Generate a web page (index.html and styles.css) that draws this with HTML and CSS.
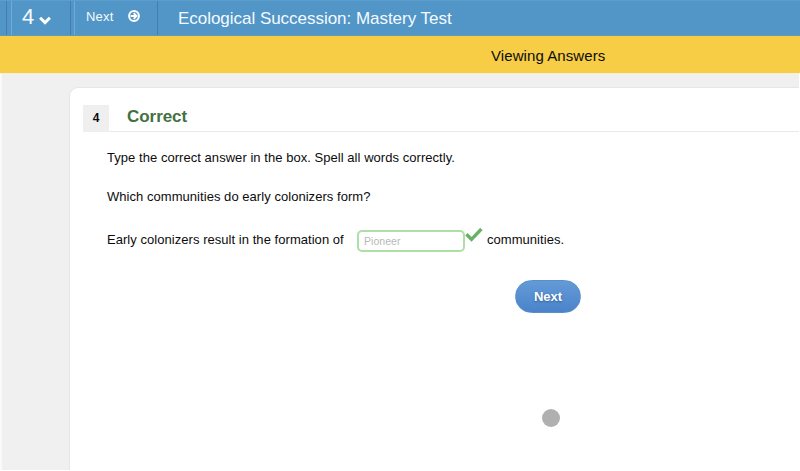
FILE: index.html
```html
<!DOCTYPE html>
<html lang="en">
<head>
<meta charset="utf-8">
<title>Ecological Succession: Mastery Test</title>
<link rel="stylesheet" href="styles.css">
</head>
<body>
<header class="topbar">
  <div class="edge"></div>
  <div class="number"><span>4</span><svg class="chevron" width="12" height="9" viewBox="0 0 12 9"><path d="M1.1 1.8 6 6.6 10.9 1.8" fill="none" stroke="#fff" stroke-width="3"/></svg></div>
  <div class="next"><span>Next</span><svg class="arrow" width="12" height="12" viewBox="0 0 12 12"><circle cx="6" cy="6" r="4.9" fill="none" stroke="#fff" stroke-width="2"/><path d="M2.6 6H8M5.7 3.1 8.6 6 5.7 8.9" fill="none" stroke="#fff" stroke-width="1.8"/></svg></div>
  <h1 class="title"><span>Ecological Succession: Mastery Test</span></h1>
</header>
<div class="notice"><span>Viewing Answers</span></div>
<main class="page">
  <section class="card">
    <div class="heading"><div class="badge">4</div><h2><span>Correct</span></h2></div>
    <div class="question">
      <p><span>Type the correct answer in the box. Spell all words correctly.</span></p>
      <p><span>Which communities do early colonizers form?</span></p>
      <div class="answer"><span class="lead">Early colonizers result in the formation of</span><div class="field">Pioneer</div><svg class="check" width="18" height="16" viewBox="0 0 18 16"><path d="M1.4 7.3 6.5 12.3 16.4 2" fill="none" stroke="#67b267" stroke-width="3.3"/></svg><span class="tail">communities.</span></div>
    </div>
    <button class="submit" type="button">Next</button>
  </section>
</main>
<div class="cursor"></div>
</body>
</html>
```
FILE: styles.css
```css
* { box-sizing: border-box; }
body { margin: 0; height: 471px; overflow: hidden; display: flex; flex-direction: column; background: #fff; color: #0c0c0c; font-family: "Liberation Sans", Arial, sans-serif; }
h1, h2, p { margin: 0; font-weight: normal; }
.topbar { height: 36px; flex: none; display: flex; background: #5295c7; border-top: 1px solid #5b9dcc; border-bottom: 1px solid #6199b7; color: #f4fbff; }
.edge { width: 7px; border-right: 1px solid #437fae; }
.number { width: 60px; display: flex; padding: 4px 0 0 10px; margin-left: 4px; border-left: 1px solid #70aad5; border-right: 1px solid #437fae; font-size: 22px; line-height: 24px; }
.chevron { margin: 11px 0 0 5px; }
.next { width: 84px; margin-left: 3px; display: flex; padding: 8px 0 0 11px; border-left: 1px solid #70aad5; border-right: 1px solid #437fae; font-size: 13px; letter-spacing: 0.2px; line-height: 16px; }
.arrow { margin: 1px 0 0 14px; }
.title { padding: 8px 0 0 20px; font-size: 17px; letter-spacing: -0.03px; line-height: 20px; white-space: nowrap; }
.notice { height: 37px; flex: none; background: #f6cd45; padding: 11px 0 0 491px; font-size: 15px; letter-spacing: 0.08px; line-height: 18px; }
.page { width: 799px; height: 397px; padding: 13px 0 0 67px; background: #f0f0f0; border-top: 1px solid #f7efd0; border-left: 2px solid #fafafa; }
.card { height: 383px; background: #fff; border: 1px solid #e6e6e6; border-right: 0; border-bottom: 0; border-top-left-radius: 9px; padding: 17px 0 0 13px; }
.heading { height: 27px; display: flex; border-bottom: 1px solid #e9e9e9; }
.badge { width: 26px; height: 27px; background: #efefef; text-align: center; font-size: 12px; font-weight: bold; line-height: 26px; }
h2 { margin-left: 18px; color: #44713f; font-size: 17px; letter-spacing: -0.05px; font-weight: bold; line-height: 24px; }
.question { padding: 18px 0 0 24px; font-size: 13px; letter-spacing: 0.045px; line-height: 16px; }
.question p { height: 39px; white-space: nowrap; }
.answer { display: flex; white-space: nowrap; padding-top: 4px; }
.lead { width: 250px; }
.field { width: 108px; height: 22px; margin-top: -2px; padding: 0 0 0 5px; border: 2px solid #aedfa6; border-radius: 5px; color: #b8b8b8; font-size: 10.5px; line-height: 18px; }
.check { margin: -5px 4px 0 0; }
.submit { display: block; width: 66px; height: 33px; margin: 28px 0 0 432px; padding: 0; border: 1px solid #568fca; border-radius: 17px; background: linear-gradient(#639bd7, #4b83cb); color: #fff; font: bold 13px/31px "Liberation Sans", Arial, sans-serif; text-shadow: 0 1px 2px #315f91; }
.cursor { position: absolute; left: 542px; top: 409px; width: 18px; height: 18px; border-radius: 50%; background: #b0b0b0; }
```
